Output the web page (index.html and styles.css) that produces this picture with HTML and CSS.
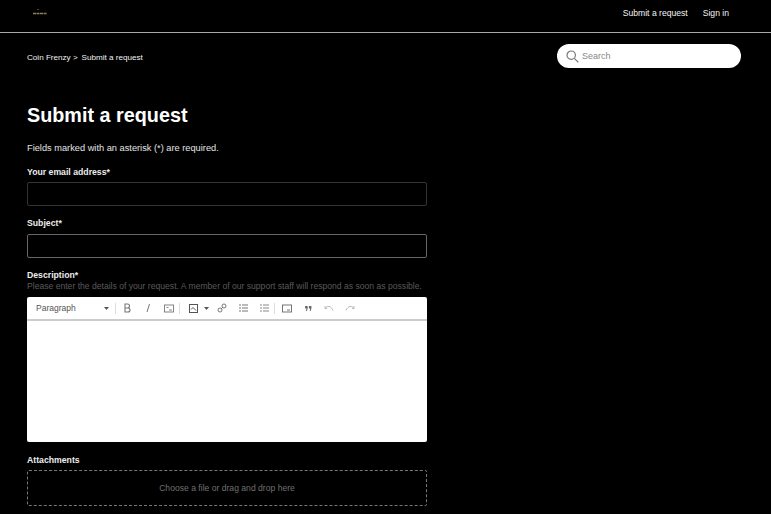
FILE: index.html
```html
<!DOCTYPE html>
<html lang="en">
<head>
<meta charset="utf-8">
<title>Submit a request</title>
<link rel="stylesheet" href="styles.css">
</head>
<body>
<header class="topbar">
  <svg class="logo" width="16" height="8" viewBox="0 0 16 8"><circle cx="6" cy="1.5" r="0.6" fill="#a98f55"/><path d="M1 5.500h14" stroke="#8f7f55" stroke-width="1.400" stroke-dasharray="3 .5"/></svg>
  <nav class="topnav">
    <a>Submit a request</a>
    <a>Sign in</a>
  </nav>
</header>
<div class="subbar">
  <div class="crumbs"><span>Coin Frenzy &gt;</span><span>Submit a request</span></div>
  <div class="search">
    <svg width="13" height="13" viewBox="0 0 13 13" fill="none" stroke="#777" stroke-width="1.200"><circle cx="5.200" cy="5.200" r="4.200"/><path d="M8.300 8.300l4 4"/></svg>
    <span>Search</span>
  </div>
</div>
<main class="content">
  <h1>Submit a request</h1>
  <p class="note">Fields marked with an asterisk (*) are required.</p>
  <div class="field email">
    <label>Your email address*</label>
    <div class="input dim"></div>
  </div>
  <div class="field subject">
    <label>Subject*</label>
    <div class="input"></div>
  </div>
  <div class="field desc">
    <label>Description*</label>
    <p class="hint">Please enter the details of your request. A member of our support staff will respond as soon as possible.</p>
    <div class="editor">
      <div class="toolbar">
        <span class="para">Paragraph</span>
        <svg class="caret first" width="5" height="3" viewBox="0 0 5 3"><path d="M0 0h5L2.500 3z" fill="#555"/></svg>
        <i class="sep s1"></i>
        <svg class="ic" width="10" height="10" viewBox="0 0 10 10" fill="none" stroke="#777" stroke-width="1.100"><path d="M3 1h2.500a2 2 0 010 4H3zM3 5h3a2 2 0 010 4H3z"/></svg>
        <svg class="ic g1" width="10" height="10" viewBox="0 0 10 10" fill="none" stroke="#777"><path d="M6.500 1L4 9"/></svg>
        <svg class="ic g2" width="10" height="9" viewBox="0 0 10 9" fill="none" stroke="#777" stroke-width=".9"><rect x=".5" y="1" width="9" height="7"/><path d="M5 6h3M2.500 3.500h2"/></svg>
        <i class="sep s2"></i>
        <svg class="ic" width="9" height="9" viewBox="0 0 9 9" fill="none" stroke="#555"><rect x=".5" y=".5" width="8" height="8"/><path d="M2 5.500l2-2 3 3"/></svg>
        <svg class="caret c2" width="5" height="3" viewBox="0 0 5 3"><path d="M0 0h5L2.500 3z" fill="#555"/></svg>
        <svg class="ic g3" width="10" height="10" viewBox="0 0 10 10" fill="none" stroke="#777"><circle cx="3" cy="7" r="2"/><circle cx="7" cy="3" r="2"/><path d="M4 6l2-2"/></svg>
        <svg class="ic g4" width="9" height="8" viewBox="0 0 9 8" fill="none" stroke="#777"><path d="M0 1h2M3 1h6M0 4h2M3 4h6M0 7h2M3 7h6"/></svg>
        <svg class="ic g5" width="9" height="8" viewBox="0 0 9 8" fill="none" stroke="#888"><path d="M0 1h2M3 1h6M0 4h2M3 4h6M0 7h2M3 7h6"/></svg>
        <i class="sep s3"></i>
        <svg class="ic" width="10" height="9" viewBox="0 0 10 9" fill="none" stroke="#666" stroke-width=".9"><rect x=".5" y="1" width="9" height="7"/><path d="M5 6h3"/></svg>
        <svg class="ic g6" width="7" height="5" viewBox="0 0 8 6" fill="#666"><path d="M0 0h3v3L2 6H1l.6-3H0zM4.500 0h3v3l-1 3h-1l.6-3H4.500z"/></svg>
        <svg class="ic g7" width="10" height="6" viewBox="0 0 10 6" fill="none" stroke="#bbb"><path d="M1 1v2.500h2M1 3.500C3 .5 7 .5 9 5.500"/></svg>
        <svg class="ic g8" width="10" height="6" viewBox="0 0 10 6" fill="none" stroke="#bbb"><path d="M9 1v2.500H7M9 3.500C7 .5 3 .5 1 5.500"/></svg>
      </div>
      <div class="editbody"></div>
    </div>
  </div>
  <div class="field attach">
    <label>Attachments</label>
    <div class="drop">Choose a file or drag and drop here</div>
  </div>
</main>
</body>
</html>
```
FILE: styles.css
```css
* { box-sizing: border-box; }
html, body { margin: 0; height: 514px; overflow: hidden; background: #000; }
body { font-family: "Liberation Sans", Arial, sans-serif; color: #fff; font-size: 9px; }
.topbar { height: 33px; border-bottom: 1px solid #aaa; display: flex; justify-content: space-between; align-items: flex-start; padding: 8px 42px 0 32px; }
.logo { display: block; }
.topnav { display: flex; gap: 15px; font-size: 8.600px; }
.topnav a { color: #f4f4f4; line-height: 22px; margin-top: -6px; }
.subbar { display: flex; justify-content: space-between; align-items: center; padding: 11px 30px 0 27px; }
.crumbs { display: flex; gap: 4px; font-size: 8.100px; color: #f2f2f2; padding-top: 2px; }
.search { width: 184px; height: 24px; border-radius: 12px; background: #fff; display: flex; align-items: center; gap: 3px; padding-left: 9px; color: #888; font-size: 9px; }
.content { width: 400px; margin-left: 27px; }
h1 { margin: 35px 0 0; font-size: 19.800px; line-height: 24px; font-weight: 700; }
.note { margin: 15px 0 0; font-size: 9.250px; line-height: 12px; color: #e4e4e4; }
.field label { display: block; font-size: 8.700px; line-height: 12px; font-weight: 700; color: #eee; }
.email { margin-top: 12px; }
.subject { margin-top: 11px; }
.subject .input { margin-top: 5px; }
.desc { margin-top: 11px; }
.attach { margin-top: 12px; }
.input { height: 24px; margin-top: 4px; border: 1px solid #666; border-radius: 2px; }
.input.dim { border-color: #333; }
.hint { margin: 0; font-size: 8.600px; line-height: 11px; color: #5a5a5a; white-space: nowrap; }
.editor { margin-top: 5px; background: #fff; border-radius: 2px; }
.toolbar { height: 24px; border-bottom: 2px solid #ccc; display: flex; align-items: center; padding-left: 9px; }
.para { width: 68px; font-size: 8.500px; color: #555; }
.caret { flex: none; }
.sep { width: 1px; height: 11px; background: #ddd; flex: none; }
.s1 { margin: 0 6px 0 6px; }
.s2 { margin: 0 9px 0 5px; }
.s3 { margin: 0 7px 0 5px; }
.g1 { margin-left: 11px; }
.g2 { margin-left: 11px; }
.c2 { margin-left: 6px; }
.g3 { margin-left: 8px; }
.g4 { margin-left: 12px; }
.g5 { margin-left: 12px; }
.g6 { margin-left: 13px; }
.g7 { margin-left: 12px; }
.g8 { margin-left: 11px; }
.editbody { height: 121px; }
.drop { margin-top: 4px; height: 36px; border: 1px dashed #777; border-radius: 2px; display: flex; align-items: center; justify-content: center; color: #707070; font-size: 8.600px; }
```
